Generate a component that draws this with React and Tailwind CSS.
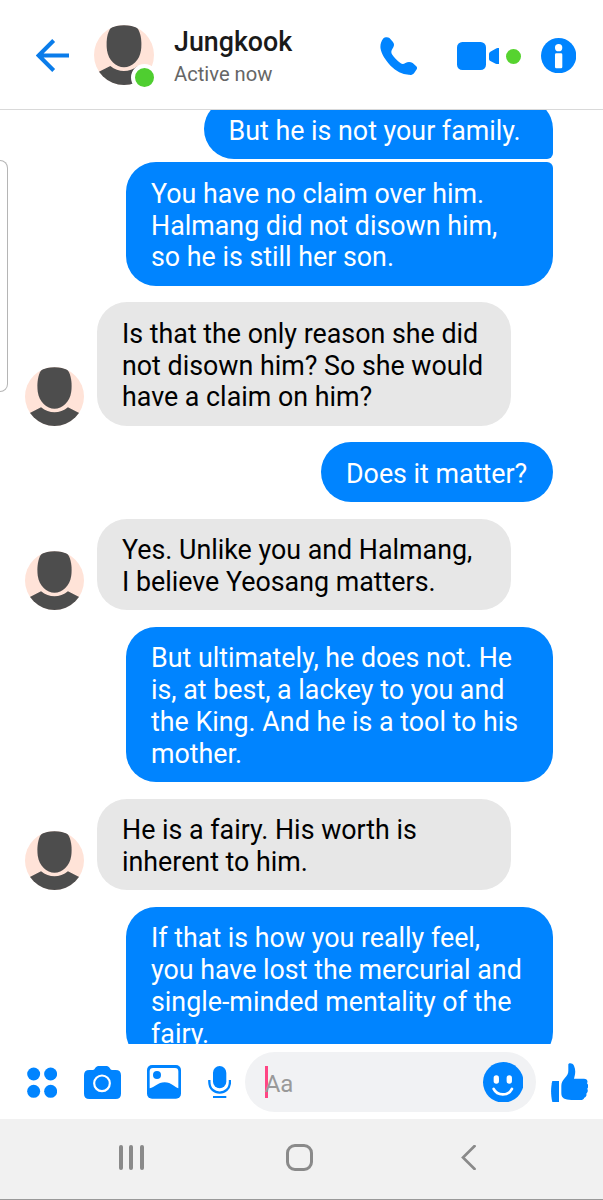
const MESSAGES = [
  { id: 1, mine: true, text: 'But he is not your family.', shape: 'w-[349.5px] rounded-[30px] rounded-br-[6px] mt-[-11px]' },
  { id: 2, mine: true, text: 'You have no claim over him.\nHalmang did not disown him,\nso he is still her son.', shape: 'w-[427px] rounded-[30px] rounded-tr-[6px] mt-[3.5px]' },
  { id: 3, mine: false, text: 'Is that the only reason she did\nnot disown him? So she would\nhave a claim on him?' },
  { id: 4, mine: true, text: 'Does it matter?', shape: 'w-[232px] rounded-[30px] mt-[16.6px]' },
  { id: 5, mine: false, text: 'Yes. Unlike you and Halmang,\nI believe Yeosang matters.' },
  { id: 6, mine: true, text: 'But ultimately, he does not. He\nis, at best, a lackey to you and\nthe King. And he is a tool to his\nmother.', shape: 'w-[427px] rounded-[30px] mt-[16.6px]' },
  { id: 7, mine: false, text: 'He is a fairy. His worth is\ninherent to him.' },
  { id: 8, mine: true, text: 'If that is how you really feel,\nyou have lost the mercurial and\nsingle-minded mentality of the\nfairy.', shape: 'w-[427px] rounded-[30px] mt-[16.6px]' },
]

function Avatar({ className }) {
  return (
    <svg viewBox="0 0 180 180" className={`block shrink-0 rounded-full ${className}`}>
      <rect width="180" height="180" fill="#ffe3d8" />
      <path d="M52 6C64-1 116-1 128 6C142 24 144 52 141 76C137 106 114 127 90 127C66 127 43 106 39 76C36 52 38 24 52 6Z" fill="#4d4d4d" />
      <path d="M0 148L49 123C61 134 76 138 90 138C104 138 119 134 131 123L180 148V180H0Z" fill="#4d4d4d" />
    </svg>
  )
}

function Message({ msg }) {
  if (msg.mine) {
    return (
      <div className={`shrink-0 self-end mr-[50px] px-[25px] pt-[16.5px] pb-[11.5px] bg-[#0084ff] text-white whitespace-pre ${msg.shape}`}>
        {msg.text}
      </div>
    )
  }
  return (
    <div className="flex shrink-0 items-end mt-[16.6px] pl-[25px] gap-[13px]">
      <Avatar className="size-[59px]" />
      <div className="w-[414px] px-[25px] pt-[16.5px] pb-[11.5px] rounded-[30px] bg-[#e7e7e7] text-black whitespace-pre">
        {msg.text}
      </div>
    </div>
  )
}

function Header() {
  return (
    <header className="flex h-[110px] shrink-0 items-center border-b border-[#d9d9d9] pl-[36px] pr-[27px] bg-white">
      <svg viewBox="0 0 99 98" className="w-[33px] h-[33px] mt-[1px] shrink-0" fill="none" stroke="#0a7cea" strokeWidth="12">
        <path d="M53 4L8 49L53 94M8 49H99" />
      </svg>

      <div className="relative ml-[25px]">
        <Avatar className="size-[60px]" />
        <span className="absolute left-[36.5px] top-[39.5px] size-[27px] rounded-full border-[4.5px] border-white bg-[#4fce30]" />
      </div>

      <div className="ml-[20px] mt-[3px] flex-1">
        <div className="text-[26.8px] leading-[32px] font-medium text-[#1a1a1a]">Jungkook</div>
        <div className="text-[20.2px] leading-[24px] mt-[4px] text-[#666]">Active now</div>
      </div>

      <svg viewBox="0 0 112 116" className="w-[37.5px] h-[38.5px] mt-[3px]" fill="#0084ff">
        <path d="M10 4C14 0 24 0 28 3L38 14C42 19 43 24 40 30L35 39C33 44 33 48 36 53C42 62 51 72 62 79C66 82 71 82 76 78C84 74 92 75 98 78L108 87C112 91 112 95 109 99L102 109C98 114 92 115 86 114C66 112 48 103 32 87C16 70 4 52 1 34C0 24 2 14 10 4Z" />
      </svg>
      <svg viewBox="0 0 126 84" className="w-[42px] h-[28px] ml-[39.5px] mt-[2px]" fill="#0084ff">
        <rect width="87" height="84" rx="16" />
        <path d="M96 36Q96 31 100 29L116 20Q119 18 122 18H126V66H122Q119 66 116 65L100 57Q96 55 96 51Z" />
      </svg>
      <span className="ml-[7px] mt-[3px] size-[15px] rounded-full bg-[#56d32f]" />
      <svg viewBox="0 0 106 106" className="size-[35.3px] ml-[20px] mt-[2px]">
        <circle cx="53" cy="53" r="53" fill="#0084ff" />
        <circle cx="53" cy="29" r="11" fill="#fff" />
        <rect x="42" y="46" width="22" height="45" rx="4" fill="#fff" />
      </svg>
    </header>
  )
}

function Composer() {
  return (
    <div className="flex h-[75px] shrink-0 items-center pl-[26.7px] pt-[1px] bg-white">
      {/* Apps */}
      <svg viewBox="0 0 91 93" className="w-[30.3px] h-[31px] shrink-0" fill="#0084ff">
        <circle cx="20" cy="21" r="19.5" />
        <circle cx="71" cy="21" r="19.5" />
        <circle cx="20" cy="73" r="19.5" />
        <circle cx="71" cy="73" r="19.5" />
      </svg>

      {/* Camera */}
      <svg viewBox="0 0 111 99" className="w-[37px] h-[33px] ml-[26.7px] shrink-0">
        <path d="M16 12H27C33 12 34 0 43 0H68C77 0 78 12 84 12H95Q111 12 111 28V83Q111 99 95 99H16Q0 99 0 83V28Q0 12 16 12Z" fill="#0084ff" />
        <circle cx="54" cy="52" r="23.5" fill="none" stroke="#fff" strokeWidth="6.5" />
      </svg>

      {/* Gallery */}
      <svg viewBox="0 0 102 101" className="w-[34px] h-[33.7px] ml-[26.3px] shrink-0">
        <rect width="102" height="101" rx="15" fill="#0084ff" />
        <path d="M18 9H84Q94 9 94 19V70C84 68 73 52 53 52C32 52 23 68 8 70V19Q8 9 18 9Z" fill="#fff" />
        <circle cx="30" cy="30" r="12" fill="#0084ff" />
      </svg>

      {/* Voice */}
      <svg viewBox="0 0 70 96" className="w-[23.3px] h-[32px] ml-[26.7px] shrink-0" fill="none" stroke="#0084ff">
        <rect x="15" width="40" height="67" rx="20" fill="#0084ff" stroke="none" />
        <path d="M4 42V47C4 91 66 91 66 47V42" strokeWidth="7" />
        <path d="M15 93H55" strokeWidth="6" />
      </svg>

      <div className="relative flex items-center w-[291.5px] h-[60px] ml-[13.7px] pl-[20px] pr-[13px] rounded-full bg-[#f1f2f4] shrink-0">
        <span className="absolute left-[20px] top-[14px] w-[3.3px] h-[32px] bg-[#ff4584]" />
        <span className="relative flex-1 text-[24px] text-[#999] mt-[3px]">Aa</span>
        <svg viewBox="0 0 122 122" className="size-[40.6px]">
          <circle cx="61" cy="61" r="61" fill="#0084ff" />
          <rect x="32" y="40" width="16" height="25" rx="8" fill="#fff" />
          <rect x="71" y="40" width="16" height="25" rx="8" fill="#fff" />
          <path d="M32 81C43 103 76 103 87 81" fill="none" stroke="#fff" strokeWidth="8" strokeLinecap="round" />
        </svg>
      </div>

      <svg viewBox="0 0 112 118" className="w-[37.3px] h-[39.3px] ml-[15px] mt-[1px] shrink-0" fill="#0084ff">
        <path d="M4 54H24V117H4C-1 98-1 72 4 54Z" />
        <path d="M31 69C31 59 35 53 41 46C49 37 52 31 52 23V4C53-1 65-1 69 8C75 21 73 33 69 47H99C108 47 112 54 108 61C113 65 113 73 109 77C112 83 110 89 106 92C108 98 105 103 100 104C99 109 94 111 88 111H61C42 111 31 106 31 91Z" />
      </svg>
    </div>
  )
}

function NavBar() {
  return (
    <nav className="flex h-[81px] shrink-0 items-center border-b border-[#999] pl-[119px] pb-[3px] bg-[#f1f1f1]">
      <div className="flex w-[24.5px] justify-between">
        <span className="w-[3.6px] h-[25px] rounded-full bg-[#8a8a8a]" />
        <span className="w-[3.6px] h-[25px] rounded-full bg-[#8a8a8a]" />
        <span className="w-[3.6px] h-[25px] rounded-full bg-[#8a8a8a]" />
      </div>
      <span className="ml-[142.5px] size-[27px] rounded-[9px] border-[3.5px] border-[#8a8a8a]" />
      <svg viewBox="0 0 44 75" className="w-[14.6px] h-[25px] ml-[148px]" fill="none" stroke="#8a8a8a" strokeWidth="8">
        <path d="M41 3L6 37.500L41 72" strokeLinecap="round" />
      </svg>
    </nav>
  )
}

export default function App() {
  return (
    <div className="relative flex flex-col w-[603px] h-[1200px] overflow-hidden bg-white font-['Roboto',sans-serif]">
      <Header />
      <main className="flex flex-col h-[934px] shrink-0 overflow-hidden text-[26.82px] leading-[31.8px]">
        {MESSAGES.map(msg => <Message key={msg.id} msg={msg} />)}
      </main>
      <Composer />
      <NavBar />
      {/* Edge panel handle */}
      <div className="absolute left-0 top-[160px] w-[8px] h-[232px] rounded-r-[8px] border border-l-0 border-[#b5b5b5]" />
    </div>
  )
}
